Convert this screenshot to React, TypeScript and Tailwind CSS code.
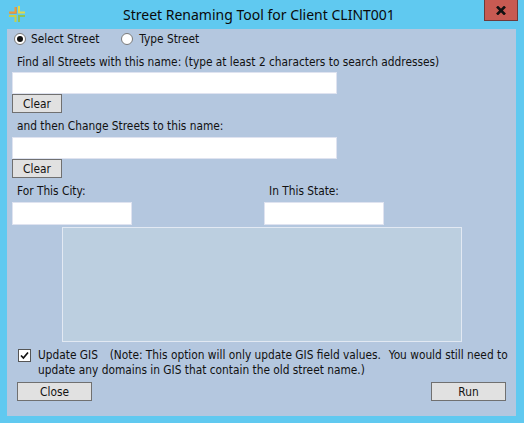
export default function App() {
  const btn = "h-[19px] border border-[#707070] bg-[#e1e1e1] text-[11.8px] leading-[16px] text-[#111] flex items-center justify-center";
  const input = "h-[22px] bg-white border border-[#dfe3f0]";
  return (
    <div className="w-[524px] h-[423px] bg-[#60c9f0] flex flex-col overflow-hidden text-[11.8px] leading-[14px] text-[#111]" style={{ fontFamily: '"DejaVu Sans Condensed", "Noto Sans", sans-serif' }}>
      <div className="h-[29px] shrink-0 flex items-start relative">
        <svg width="16" height="16" viewBox="0 0 16 16" className="ml-[9px] mt-[6px]" fill="none" strokeWidth="2">
          <path d="M7.5 1V7.5H0.5" stroke="#8a9a9a" strokeWidth="1" />
          <path d="M6.5 1V6.5H0" stroke="#ee9a3a" strokeWidth="2" />
          <path d="M10 0V6.5H16" stroke="#e2d94a" />
          <path d="M6.5 16V10H0" stroke="#c8d04a" />
          <path d="M10 16V10H16" stroke="#8cc45a" />
        </svg>
        <div className="absolute left-[123px] top-[7px] text-[14px] leading-[16px] text-[#0a0a0a] whitespace-nowrap" style={{ fontFamily: '"Noto Sans", sans-serif' }}>Street Renaming Tool for Client CLINT001</div>
        <div className="absolute left-[484px] top-0 w-[34px] h-[21px] bg-[#c75a52] border border-[#6e3a3a] border-t-0 flex items-center justify-center">
          <svg width="10" height="9" viewBox="0 0 10 9"><path d="M1 0.5L9 8.5M9 0.5L1 8.5" stroke="#111" strokeWidth="2.6" /></svg>
        </div>
      </div>
      <div className="mx-[7px] w-[509px] h-[387px] bg-[#b4c7df] flex flex-col pl-[5px] relative">
        <div className="flex items-center h-[20px]">
          <span className="w-[12px] h-[12px] ml-[2px] rounded-full bg-white border border-[#7a7a7a] flex items-center justify-center"><span className="w-[6px] h-[6px] rounded-full bg-[#111]" /></span>
          <span className="ml-[5px]">Select Street</span>
          <span className="w-[12px] h-[12px] ml-[22px] rounded-full bg-white border border-[#7a7a7a]" />
          <span className="ml-[6px]">Type Street</span>
        </div>
        <div className="ml-[5px] mt-[2px] h-[21px] flex items-center">Find all Streets with this name: (type at least 2 characters to search addresses)</div>
        <div className={`${input} w-[325px]`} />
        <button className={`${btn} w-[50px]`}>Clear</button>
        <div className="ml-[5px] mt-[2px] h-[22px] flex items-center">and then Change Streets to this name:</div>
        <div className={`${input} w-[325px]`} />
        <button className={`${btn} w-[50px]`}>Clear</button>
        <div className="flex mt-[2px]">
          <div className="w-[252px]">
            <div className="ml-[5px] h-[22px] flex items-center">For This City:</div>
            <div className={`${input} w-[120px] h-[23px]`} />
          </div>
          <div>
            <div className="ml-[5px] h-[22px] flex items-center">In This State:</div>
            <div className={`${input} w-[120px] h-[23px]`} />
          </div>
        </div>
        <div className="ml-[50px] mt-[2px] w-[400px] h-[115px] bg-[#bccfe0] border border-[#e2e9f3]" />
        <div className="flex mt-[6px] ml-[6px]">
          <span className="w-[13px] h-[13px] mt-[1px] bg-white border border-[#555] flex items-center justify-center shrink-0">
            <svg width="9" height="9" viewBox="0 0 9 9" fill="none"><path d="M1 4.5L3.4 7L8 1.5" stroke="#111" strokeWidth="1.7" /></svg>
          </span>
          <div className="ml-[7px] w-[475px] leading-[15px]">Update GIS&nbsp; <span className="ml-[5px]">(Note: This option will only update GIS field values.&nbsp; <span className="ml-[1px]">You would still need to</span></span> update any domains in GIS that contain the old street name.)</div>
        </div>
        <div className="flex justify-between mt-[4px] ml-[5px] mr-[10px]">
          <button className={`${btn} w-[75px]`}>Close</button>
          <button className={`${btn} w-[75px]`}>Run</button>
        </div>
      </div>
    </div>
  );
}
